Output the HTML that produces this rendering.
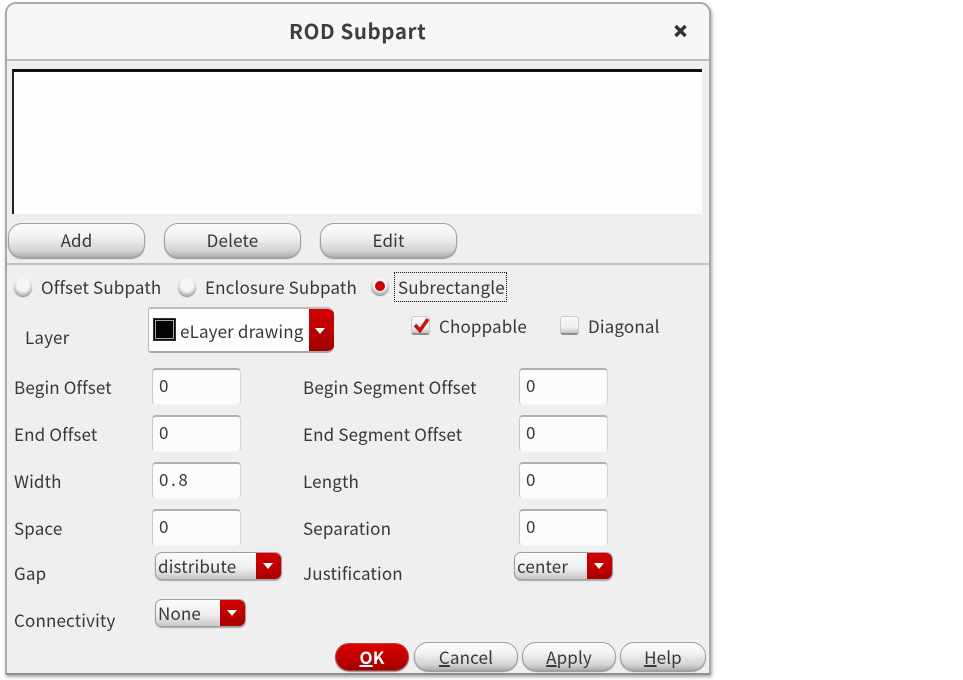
<!DOCTYPE html>
<html><head><meta charset="utf-8">
<style>
html,body{margin:0;padding:0;background:#fff;width:963px;height:680px;overflow:hidden}
*{box-sizing:border-box}
body{font-family:"Liberation Sans","Noto Sans CJK JP",sans-serif;position:relative}
#all{position:absolute;left:0;top:0;width:963px;height:680px;font-family:"Noto Sans CJK JP","DejaVu Sans",sans-serif;font-size:17px;letter-spacing:.15px;color:#33393b;filter:blur(.35px)}
.a{position:absolute}
.t{position:absolute;white-space:nowrap;line-height:20px;height:20px;margin-top:-1px}
#win{left:5px;top:2px;width:706px;height:673px;background:#efefef;border:2px solid #a8a8a8;border-bottom-color:#8f8f8f;border-radius:11px 11px 2px 2px;box-shadow:1px 2px 3px rgba(0,0,0,.35)}
.btn{position:absolute;border:1px solid #a0a0a0;border-radius:14px;background:linear-gradient(#fbfbfb 0%,#f3f3f3 35%,#d4d4d4 80%,#aeaeae 100%);box-shadow:0 1px 1px rgba(0,0,0,.4);text-align:center;line-height:32px}
.inp{position:absolute;width:89px;height:37px;background:#fcfcfc;border:1px solid #f7f7f7;border-top:2px solid #b0b0b0;border-left:1px solid #c8c8c8;border-right:1px solid #d4d4d4;border-radius:4px;padding-left:6px;line-height:29px}
.sel{position:absolute;height:28px;border:1px solid #a0a0a0;border-radius:7px;background:linear-gradient(#fafafa,#f0f0f0 55%,#c8c8c8);box-shadow:0 1px 1px rgba(0,0,0,.3);line-height:25px;padding-left:2px;overflow:hidden}
.arr{position:absolute;right:0;top:0;bottom:0;width:25px;background:linear-gradient(#d40000,#a80000)}
.arr:after{content:"";position:absolute;left:7px;top:10px;border-left:5.5px solid transparent;border-right:5.5px solid transparent;border-top:6px solid #fff}
.radio{position:absolute;width:18px;height:18px;border-radius:50%;background:radial-gradient(circle at 50% 38%,#f6f6f6 44%,#c8c8c8 64%,#808080 100%);box-shadow:0 1px 1px rgba(0,0,0,.4)}
.chk{position:absolute;width:19px;height:19px;border-radius:3px;background:linear-gradient(#f8f8f8,#ececec 70%,#c0c0c0);border:1px solid #cacaca;border-bottom:2px solid #8e8e8e}
u{text-decoration-thickness:2px;text-underline-offset:1px}
</style></head>
<body>
<div id="all">
<div id="win" class="a"></div>
<div class="a" style="left:7px;top:4px;width:702px;height:55px;background:#f7f7f7;border-radius:9px 9px 0 0"></div>
<div class="a" style="left:7px;top:59px;width:702px;height:2px;background:#bcbcbc"></div>
<div class="t" style="left:289px;top:21px;font-size:20.5px;font-weight:bold;color:#3a3f41;letter-spacing:.6px">ROD Subpart</div>
<svg class="a" style="left:673px;top:24px" width="15" height="14" viewBox="0 0 15 14"><path d="M2.5 2 L12.5 12 M12.5 2 L2.5 12" stroke="#2e3436" stroke-width="3.4" fill="none"/></svg>

<div class="a" style="left:12px;top:69px;width:690px;height:145px;background:#fdfdfd;border-top:3px solid #111;border-left:2px solid #222"></div>

<div class="btn" style="left:8px;top:223px;width:137px;height:35px">Add</div>
<div class="btn" style="left:164px;top:223px;width:137px;height:35px">Delete</div>
<div class="btn" style="left:320px;top:223px;width:137px;height:35px">Edit</div>

<div class="a" style="left:7px;top:263px;width:702px;height:2px;background:#c0c0c0"></div>

<div class="radio" style="left:14px;top:278px"></div>
<div class="t" style="left:41px;top:278px">Offset Subpath</div>
<div class="radio" style="left:178px;top:278px"></div>
<div class="t" style="left:205px;top:278px">Enclosure Subpath</div>
<div class="radio" style="left:371px;top:277px"></div>
<div class="a" style="left:375px;top:281px;width:10px;height:10px;border-radius:50%;background:#cc0000"></div>
<div class="a" style="left:394px;top:272px;width:113px;height:30px;border:1px dotted #111"></div>
<div class="t" style="left:398px;top:278px">Subrectangle</div>

<div class="t" style="left:25px;top:328px">Layer</div>
<div class="a" style="left:148px;top:307px;width:186px;height:46px;background:#fdfdfd;border-top:2px solid #bcbcbc;border-bottom:2px solid #a8a8a8;border-left:1px solid #b8b8b8;border-radius:3px 7px 7px 3px;overflow:hidden">
  <div class="a" style="right:0;top:0;bottom:0;width:25px;background:linear-gradient(#d40000,#a00000)"></div>
  <div class="a" style="left:166px;top:19px;border-left:5px solid transparent;border-right:5px solid transparent;border-top:6px solid #fff"></div>
  <div class="a" style="left:4px;top:9px;width:23px;height:23px;background:#050505;border:1px solid #333;outline:1px solid #aaa;outline-offset:-3px"></div>
</div>
<div class="t" style="left:180px;top:322px">eLayer drawing</div>

<div class="chk" style="left:411px;top:316px"></div>
<svg class="a" style="left:412px;top:316px" width="19" height="19" viewBox="0 0 19 19"><path d="M3 9 L8 14.5 L16 3" stroke="#cc1111" stroke-width="3.6" fill="none"/></svg>
<div class="t" style="left:439px;top:317px">Choppable</div>
<div class="chk" style="left:560px;top:316px"></div>
<div class="t" style="left:588px;top:317px">Diagonal</div>

<div class="t" style="left:14px;top:378px">Begin Offset</div>
<div class="inp" style="left:152px;top:368px">0</div>
<div class="t" style="left:303px;top:378px">Begin Segment Offset</div>
<div class="inp" style="left:519px;top:368px">0</div>

<div class="t" style="left:14px;top:425px">End Offset</div>
<div class="inp" style="left:152px;top:415px">0</div>
<div class="t" style="left:303px;top:425px">End Segment Offset</div>
<div class="inp" style="left:519px;top:415px">0</div>

<div class="t" style="left:14px;top:472px">Width</div>
<div class="inp" style="left:152px;top:462px;letter-spacing:2.6px">0.8</div>
<div class="t" style="left:303px;top:472px">Length</div>
<div class="inp" style="left:519px;top:462px">0</div>

<div class="t" style="left:14px;top:519px">Space</div>
<div class="inp" style="left:152px;top:509px">0</div>
<div class="t" style="left:303px;top:519px">Separation</div>
<div class="inp" style="left:519px;top:509px">0</div>

<div class="t" style="left:14px;top:564px">Gap</div>
<div class="sel" style="left:155px;top:552px;width:127px">distribute<div class="arr"></div></div>
<div class="t" style="left:303px;top:564px">Justification</div>
<div class="sel" style="left:514px;top:552px;width:99px">center<div class="arr"></div></div>

<div class="t" style="left:14px;top:611px">Connectivity</div>
<div class="sel" style="left:155px;top:599px;width:91px">None<div class="arr"></div></div>

<div class="btn" style="left:335px;top:643px;width:74px;height:28px;line-height:26px;background:linear-gradient(#dc0000,#c20000 50%,#a00000);border-color:#b04040;color:#fff;font-weight:bold;font-size:17px"><u>O</u>K</div>
<div class="btn" style="left:414px;top:642px;width:104px;height:29px;line-height:28px"><u>C</u>ancel</div>
<div class="btn" style="left:522px;top:642px;width:94px;height:29px;line-height:28px"><u>A</u>pply</div>
<div class="btn" style="left:620px;top:642px;width:86px;height:29px;line-height:28px"><u>H</u>elp</div>
</div>
</body></html>
